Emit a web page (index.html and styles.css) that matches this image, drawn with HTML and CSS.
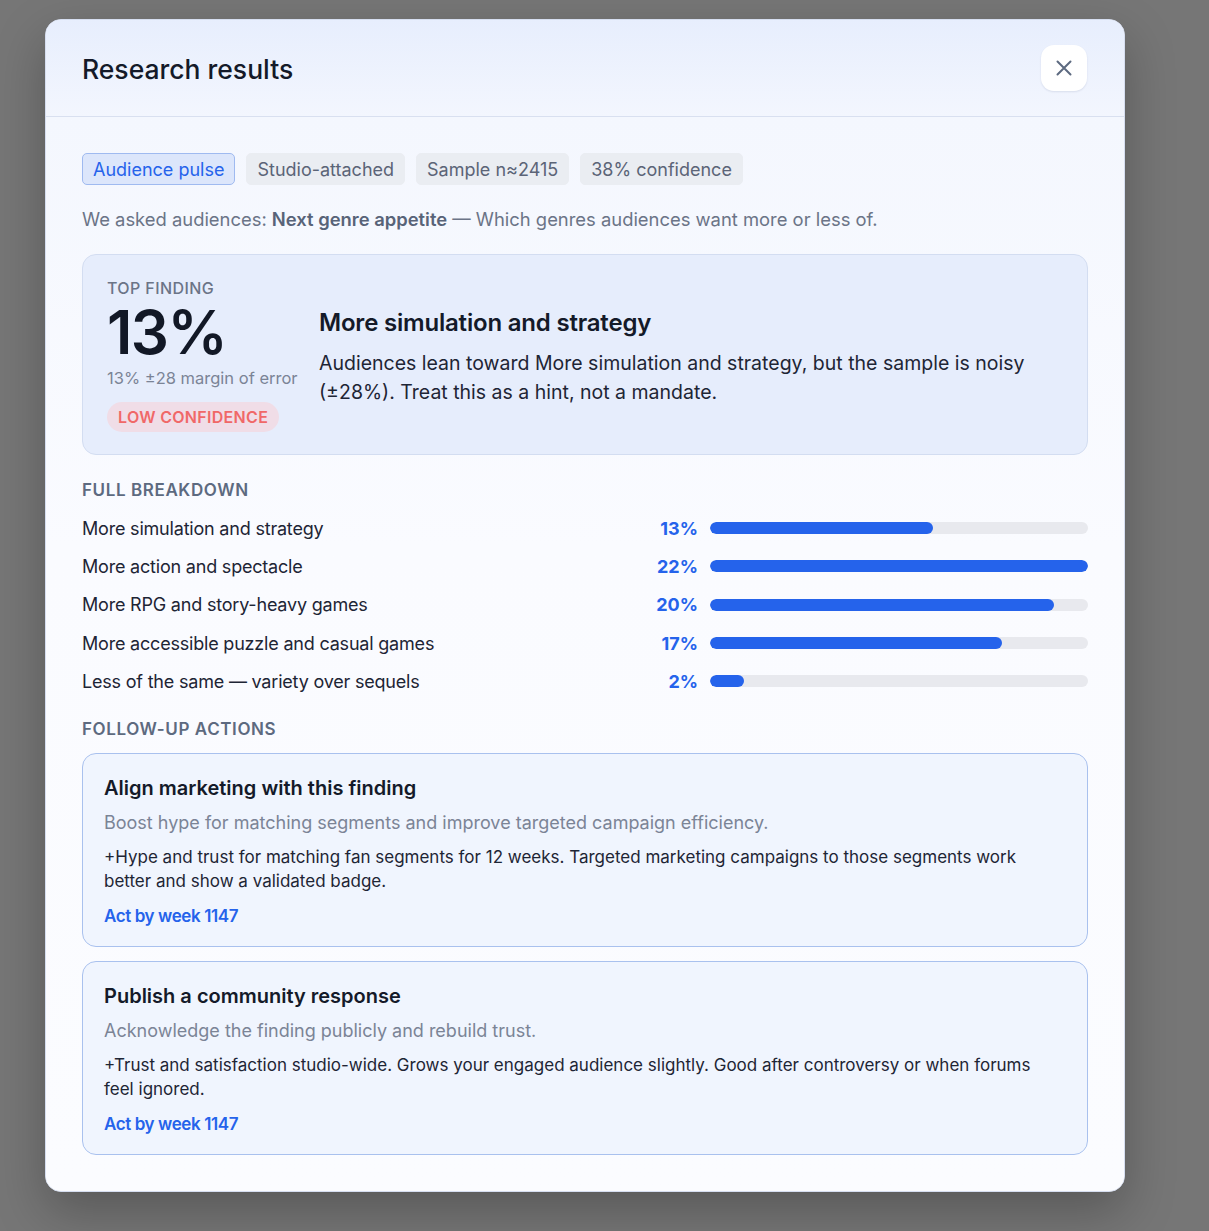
FILE: index.html
```html
<!DOCTYPE html>
<html lang="en">
<head>
    <meta charset="UTF-8">
    <title>Research results</title>
    <link rel="stylesheet" href="styles.css">
</head>
<body>
    <div class="backdrop">
        <div class="modal">
            <div class="modal-header">
                <h2>Research results</h2>
                <button class="close-btn" aria-label="Close">
                    <svg width="20" height="20" viewBox="0 0 20 20" fill="none" stroke="#5d6a80" stroke-width="2" stroke-linecap="round">
                        <path d="M3.5 3.5 L16.5 16.5 M16.5 3.5 L3.5 16.5"/>
                    </svg>
                </button>
            </div>

            <div class="modal-body">
                <div class="chips">
                    <span class="chip chip-primary">Audience pulse</span>
                    <span class="chip">Studio-attached</span>
                    <span class="chip">Sample n≈2415</span>
                    <span class="chip">38% confidence</span>
                </div>

                <p class="question">We asked audiences: <strong>Next genre appetite</strong> — Which genres audiences want more or less of.</p>

                <div class="top-finding">
                    <div class="finding-stat">
                        <div class="eyebrow">TOP FINDING</div>
                        <div class="big-number">13%</div>
                        <div class="margin">13% ±28 margin of error</div>
                        <span class="confidence-pill">LOW CONFIDENCE</span>
                    </div>
                    <div class="finding-text">
                        <h3>More simulation and strategy</h3>
                        <p>Audiences lean toward More simulation and strategy, but the sample is noisy (±28%). Treat this as a hint, not a mandate.</p>
                    </div>
                </div>

                <h4 class="section-title">FULL BREAKDOWN</h4>
                <div class="breakdown">
                    <div class="row">
                        <span class="label">More simulation and strategy</span>
                        <span class="pct">13%</span>
                        <div class="bar"><div class="fill" style="width: 59.1%"></div></div>
                    </div>
                    <div class="row">
                        <span class="label">More action and spectacle</span>
                        <span class="pct">22%</span>
                        <div class="bar"><div class="fill" style="width: 100%"></div></div>
                    </div>
                    <div class="row">
                        <span class="label">More RPG and story-heavy games</span>
                        <span class="pct">20%</span>
                        <div class="bar"><div class="fill" style="width: 90.9%"></div></div>
                    </div>
                    <div class="row">
                        <span class="label">More accessible puzzle and casual games</span>
                        <span class="pct">17%</span>
                        <div class="bar"><div class="fill" style="width: 77.3%"></div></div>
                    </div>
                    <div class="row">
                        <span class="label">Less of the same — variety over sequels</span>
                        <span class="pct">2%</span>
                        <div class="bar"><div class="fill" style="width: 9.1%"></div></div>
                    </div>
                </div>

                <h4 class="section-title">FOLLOW-UP ACTIONS</h4>
                <div class="actions">
                    <div class="action-card">
                        <h5>Align marketing with this finding</h5>
                        <p class="action-sub">Boost hype for matching segments and improve targeted campaign efficiency.</p>
                        <p class="action-desc">+Hype and trust for matching fan segments for 12 weeks. Targeted marketing campaigns to those segments work better and show a validated badge.</p>
                        <div class="deadline">Act by week 1147</div>
                    </div>
                    <div class="action-card">
                        <h5>Publish a community response</h5>
                        <p class="action-sub">Acknowledge the finding publicly and rebuild trust.</p>
                        <p class="action-desc">+Trust and satisfaction studio-wide. Grows your engaged audience slightly. Good after controversy or when forums feel ignored.</p>
                        <div class="deadline">Act by week 1147</div>
                    </div>
                </div>
            </div>
        </div>
    </div>
</body>
</html>
```

FILE: styles.css
```css
* {
    box-sizing: border-box;
}
body {
    margin: 0;
    font-family: Inter, "Noto Sans", sans-serif;
    background-color: #767676;
    color: #1a2030;
}
.backdrop {
    min-height: 1231px;
    padding: 19px 0 0 45px;
}
.modal {
    width: 1080px;
    background: #f8faff;
    border: 1px solid #d6def0;
    border-radius: 16px;
    box-shadow: 0 20px 50px rgba(0,0,0,0.25);
    overflow: hidden;
}
.modal-header {
    height: 97px;
    display: flex;
    align-items: center;
    justify-content: space-between;
    padding: 0 37px 0 36px;
    background: linear-gradient(180deg, #e7eefd 0%, #f3f6fe 100%);
    border-bottom: 1px solid #d9e0f0;
}
.modal-header h2 {
    margin: 0;
    font-size: 26.5px;
    font-weight: 500;
    color: #141a29;
    padding-top: 2px;
}
.close-btn {
    width: 46px;
    height: 46px;
    border: none;
    border-radius: 13px;
    background: #ffffff;
    box-shadow: 0 1px 2px rgba(40,60,110,0.12);
    display: flex;
    align-items: center;
    justify-content: center;
    cursor: pointer;
}
.modal-body {
    padding: 36px 36px 36px 36px;
    background: linear-gradient(180deg, #f4f7fe 0%, #fafbff 40%, #fbfcff 100%);
}
.chips {
    display: flex;
    gap: 11px;
}
.chip {
    height: 32px;
    padding: 0 10px;
    display: inline-flex;
    align-items: center;
    font-size: 18px;
    color: #5b6477;
    background: #eaedf2;
    border: 1px solid #eaedf2;
    border-radius: 5px;
}
.chip-primary {
    color: #2563eb;
    background: #dce6fb;
    border-color: #9fbaf0;
}
.question {
    margin: 23px 0 24px;
    font-size: 18.4px;
    color: #6b7487;
}
.question strong {
    color: #586378;
    font-weight: 600;
}
.top-finding {
    display: flex;
    gap: 20px;
    padding: 23px 24px 22px;
    background: #e6edfc;
    border: 1px solid #d3ddf1;
    border-radius: 14px;
}
.finding-stat {
    width: 192px;
    flex-shrink: 0;
}
.eyebrow {
    font-size: 16px;
    font-weight: 500;
    color: #6b7487;
    letter-spacing: 0.4px;
}
.big-number {
    font-size: 60px;
    font-weight: 600;
    line-height: 60px;
    letter-spacing: -1.5px;
    color: #121826;
    margin: 4px 0 9px;
}
.margin {
    font-size: 16.5px;
    color: #7b8496;
    margin-top: -3px;
    white-space: nowrap;
}
.confidence-pill {
    display: inline-block;
    margin-top: 14px;
    padding: 5px 11px;
    border-radius: 15px;
    background: #f0dde7;
    color: #f06868;
    font-size: 16px;
    font-weight: 600;
    letter-spacing: 0.3px;
}
.finding-text {
    padding-top: 30px;
}
.finding-text h3 {
    margin: 0 0 12px;
    font-size: 24px;
    font-weight: 600;
    letter-spacing: -0.2px;
    color: #141a29;
}
.finding-text p {
    margin: 0;
    font-size: 19.5px;
    line-height: 29px;
    color: #1e2535;
}
.section-title {
    margin: 25px 0 9px;
    font-size: 17px;
    font-weight: 600;
    color: #5d6a80;
    letter-spacing: 0.6px;
}
.breakdown + .section-title {
    margin-top: 19px;
}
.breakdown {
    display: flex;
    flex-direction: column;
}
.row {
    display: grid;
    grid-template-columns: 1fr 60px 378px;
    gap: 12px;
    align-items: center;
    height: 38.3px;
}
.label {
    font-size: 18px;
    color: #1e2535;
    letter-spacing: -0.2px;
}
.pct {
    text-align: right;
    font-size: 18px;
    font-weight: 700;
    color: #2563eb;
}
.bar {
    height: 12px;
    background: #e8e9ee;
    border-radius: 6px;
    overflow: hidden;
}
.fill {
    height: 100%;
    background: #2563eb;
    border-radius: 6px;
}
.actions {
    display: flex;
    flex-direction: column;
    gap: 14px;
    margin-top: 14px;
}
.action-card {
    padding: 22px 32px 20px 21px;
    background: #f0f5fe;
    border: 1px solid #a9c1ee;
    border-radius: 14px;
}
.action-card h5 {
    margin: 0 0 12px;
    font-size: 20px;
    font-weight: 600;
    color: #141a29;
}
.action-sub {
    margin: 0 0 12px;
    font-size: 18px;
    color: #7b8496;
}
.action-desc {
    margin: 0 0 13px;
    font-size: 17px;
    line-height: 24px;
    color: #1e2535;
}
.deadline {
    font-size: 17px;
    font-weight: 600;
    color: #2563eb;
    letter-spacing: -0.4px;
}
```
